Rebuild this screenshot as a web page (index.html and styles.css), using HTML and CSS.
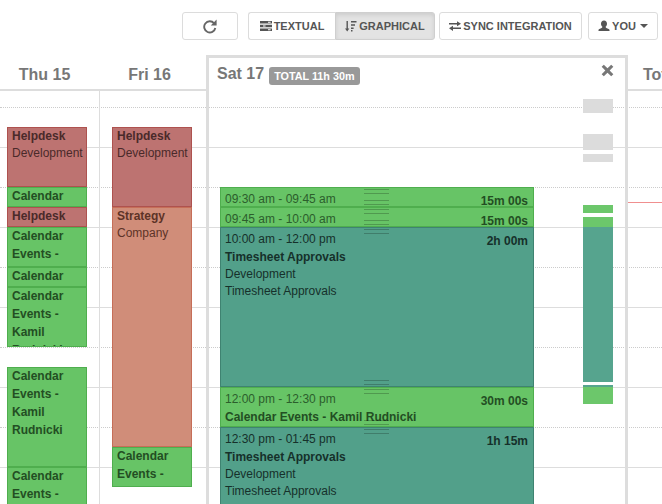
FILE: index.html
```html
<!DOCTYPE html>
<html lang="en">
<head>
<meta charset="utf-8">
<title>Timesheet</title>
<link rel="stylesheet" href="styles.css">
</head>
<body>
<div class="toolbar">
  <button class="btn btn-refresh" aria-label="Refresh">
    <svg class="ico ico-refresh" viewBox="0 0 16 16"><path class="arc" d="M12.100 5.300 A5.600 5.600 0 1 0 13.300 10"/><path d="M14.600 1.600V7.400H8.800z"/></svg>
  </button>
  <div class="btn-group">
    <button class="btn"><svg class="ico" viewBox="0 0 12 12"><path d="M0 1h12v2.600H0zM0 4.700h12v2.600H0zM0 8.400h12V11H0z"/><path class="cut" d="M8 1.800h2.600v1H8zM3 5.500h2.600v1H3zM8 9.200h2.600v1H8z"/></svg>Textual</button>
    <button class="btn active"><svg class="ico" viewBox="0 0 12 12"><path d="M1.500 1h1.400v7.500h1.400L2.200 11.500 0 8.500h1.500zM6 1h5.500v1.600H6zM6 4.200h4v1.600H6zM6 7.400h2.600v1.600H6zM6 10h1.500v1.500H6z"/></svg>Graphical</button>
  </div>
  <button class="btn btn-sync"><svg class="ico" viewBox="0 0 12 12"><path d="M0 3h8V1.200L12 3.800 8 6.200V4.600H0zM12 7.400H4V5.800L0 8.300 4 10.900V9H12z"/></svg>Sync Integration</button>
  <button class="btn btn-you"><svg class="ico" viewBox="0 0 12 12"><path d="M6 .5c1.900 0 3 1.400 3 3.200 0 1.300-.6 2.500-1.400 3.100 0 .8.400 1 1.400 1.400 1.300.5 2.500 1 2.500 1.800v1H.5v-1c0-.8 1.200-1.300 2.500-1.800 1-.4 1.400-.6 1.400-1.400C3.600 6.200 3 5 3 3.700 3 1.900 4.100.5 6 .5z"/></svg>You<span class="caret"></span></button>
</div>

<div class="calendar">
  <div class="gridlines">
    <i class="dot"></i><i class="sol"></i><i class="dot"></i><i class="sol"></i><i class="dot"></i><i class="sol"></i><i class="dot"></i><i class="sol"></i><i class="dot"></i><i class="sol"></i>
  </div>
  <div class="now-line"></div>

  <section class="day day-thu">
    <h2 class="day-head">Thu 15</h2>
    <div class="stack">
      <div class="ev red" style="height:60px"><b>Helpdesk</b><span>Development</span></div>
      <div class="ev green" style="height:20px"><b>Calendar</b></div>
      <div class="ev red" style="height:20px"><b>Helpdesk</b></div>
      <div class="ev green" style="height:40px"><b>Calendar Events -</b></div>
      <div class="ev green" style="height:20px"><b>Calendar</b></div>
      <div class="ev green" style="height:60px"><b>Calendar Events - Kamil Rudnicki</b></div>
      <div class="ev green gap" style="height:100px"><b>Calendar Events - Kamil Rudnicki</b></div>
      <div class="ev green" style="height:60px"><b>Calendar Events - Kamil Rudnicki</b></div>
    </div>
  </section>

  <section class="day day-fri">
    <h2 class="day-head">Fri 16</h2>
    <div class="stack">
      <div class="ev red" style="height:80px"><b>Helpdesk</b><span>Development</span></div>
      <div class="ev salmon" style="height:240px"><b>Strategy</b><span>Company</span></div>
      <div class="ev green" style="height:40px"><b>Calendar Events -</b></div>
    </div>
  </section>

  <section class="panel">
    <header class="panel-head">
      <h2 class="panel-title">Sat 17</h2>
      <span class="badge">TOTAL 11h 30m</span>
      <svg class="close" viewBox="0 0 12 12"><path d="M2.600.6 6 4 9.400.6 11.400 2.600 8 6l3.400 3.400-2 2L6 8l-3.400 3.400-2-2L4 6 .6 2.600z"/></svg>
    </header>
    <div class="panel-body">
      <div class="rows">
        <article class="row green" style="height:20px"><span class="dur">15m 00s</span><div>09:30 am - 09:45 am</div></article>
        <article class="row green" style="height:20px"><span class="dur">15m 00s</span><div>09:45 am - 10:00 am</div></article>
        <article class="row teal" style="height:160px"><span class="dur">2h 00m</span><div>10:00 am - 12:00 pm</div><div><b>Timesheet Approvals</b></div><div class="sub">Development</div><div class="sub">Timesheet Approvals</div></article>
        <article class="row green" style="height:40px"><span class="dur">30m 00s</span><div>12:00 pm - 12:30 pm</div><div><b>Calendar Events - Kamil Rudnicki</b></div></article>
        <article class="row teal" style="height:100px"><span class="dur">1h 15m</span><div>12:30 pm - 01:45 pm</div><div><b>Timesheet Approvals</b></div><div class="sub">Development</div><div class="sub">Timesheet Approvals</div></article>
      </div>
      <div class="minimap">
        <i class="m-grey" style="height:14px"></i>
        <i class="m-grey" style="height:16px;margin-top:21px"></i>
        <i class="m-grey" style="height:8px;margin-top:4px"></i>
        <i class="m-green" style="height:8px;margin-top:43px"></i>
        <i class="m-green" style="height:10px;margin-top:4px"></i>
        <i class="m-teal" style="height:155px"></i>
        <i class="m-teal" style="height:2px;margin-top:3px"></i>
        <i class="m-green" style="height:17px"></i>
      </div>
    </div>
  </section>

  <section class="day day-total">
    <h2 class="day-head">Total</h2>
  </section>
</div>
</body>
</html>
```
FILE: styles.css
```css
* { box-sizing: border-box; }
html, body { margin: 0; height: 504px; overflow: hidden; background: #fff; }
body { font: 12px/18px "Liberation Sans", Arial, sans-serif; color: #333; }

.toolbar { display: flex; height: 55px; padding: 12px 4px 0 182px; }
.btn {
  display: inline-flex; align-items: center; justify-content: center; height: 28px; padding: 0;
  border: 1px solid #dcdcdc; border-radius: 3px; background: #fff; color: #555; white-space: nowrap;
  font: bold 11px/1 "Liberation Sans", Arial, sans-serif; text-transform: uppercase;
}
.btn.active { background: #e3e3e3; border-color: #cfcfcf; box-shadow: inset 0 2px 4px rgba(0,0,0,.1); }
.btn-refresh { width: 56px; margin-right: 10px; }
.btn-group { display: flex; margin-right: 4px; }
.btn-group .btn:first-child { width: 87px; border-radius: 3px 0 0 3px; border-right: 0; }
.btn-group .btn:last-child { width: 100px; border-radius: 0 3px 3px 0; }
.btn-sync { width: 143px; margin-right: 6px; }
.btn-you { width: 70px; }
.ico { width: 12px; height: 12px; margin-right: 2px; fill: #555; flex: none; }
.ico .cut { fill: #fff; }
.ico-refresh { width: 16px; height: 16px; margin: 0; fill: #666; }
.ico-refresh .arc { fill: none; stroke: #666; stroke-width: 1.900; }
.caret { margin-left: 4px; border-top: 4px solid #555; border-left: 4px solid transparent; border-right: 4px solid transparent; }

.calendar { position: relative; display: flex; height: 449px; overflow: hidden; }
.gridlines { position: absolute; left: 0; right: 0; top: 34px; border-top: 2px solid #ddd; }
.gridlines i { display: block; height: 40px; }
.gridlines i:first-child { height: 17px; }
.gridlines .dot { border-bottom: 1px dotted #ccc; }
.gridlines .sol { border-bottom: 1px solid #ddd; }
.now-line { position: absolute; left: 628px; right: 0; top: 147px; height: 1px; background: #f08f8f; }

.day { position: relative; flex: none; display: flex; flex-direction: column; height: 449px; }
.day-head { margin: 0; height: 36px; flex: none; padding-top: 9px; font: bold 16px/22px "Liberation Sans", Arial, sans-serif; color: #777; text-align: center; }
.stack { display: flex; flex-direction: column; flex: 1; padding-top: 36px; }
.day-thu { width: 99px; }
.day-thu .stack { padding-left: 7px; padding-right: 12px; }
.day-thu .day-head { padding-right: 10px; }
.day-fri { width: 107px; }
.day-fri .day-head { padding-right: 6px; }
.day-fri .stack { padding-left: 12px; padding-right: 14px; border-left: 1px solid #ddd; }
.day-total { width: 34px; padding-left: 15px; }
.day-total .day-head { text-align: left; white-space: nowrap; }

.ev { overflow: hidden; padding: 0 4px; border-width: 1px; border-style: solid; flex: none; }
.ev b { display: block; margin-top: -1px; line-height: 18px; }
.ev span { display: block; line-height: 17px; }
.ev.gap { margin-top: 20px; }
.red { background: #bd7371; border-color: #ae524f; color: #4a2a2a; }
.salmon { background: #d08d79; border-color: #c66e58; color: #5d3327; }
.green { background: #67c466; border-color: #4fae4e; color: #234e23; }
.teal { background: #52a08a; border-color: #3f8371; color: #16302a; }

.panel {
  position: relative; flex: none; width: 422px; height: 449px;
  border: 3px solid #ddd; border-bottom: 0;
}
.panel-head { display: flex; align-items: flex-start; height: 33px; padding: 5px 0 0 8px; background: #fff; }
.panel-title { margin: 0 5px 0 0; font: bold 16px/22px "Liberation Sans", Arial, sans-serif; color: #777; }
.badge { margin-top: 4px; padding: 0 5px; height: 18px; border-radius: 3px; background: #999; color: #fff; font: bold 10.800px/18px "Liberation Sans", Arial, sans-serif; }
.close { position: absolute; right: 11px; top: 6px; width: 13px; height: 13px; fill: #777; }

.panel-body { display: flex; padding: 96px 0 0 11px; }
.rows { width: 314px; flex: none; }
.row { position: relative; padding: 2px 5px 0 4px; border-width: 1px; border-style: solid; }
.row::before, .row::after {
  content: ""; position: absolute; left: 143px; width: 25px; height: 3px;
  border-top: 1px solid rgba(0,0,0,.22); border-bottom: 1px solid rgba(0,0,0,.22);
}
.row::before { top: 1px; }
.row::after { bottom: 1px; }
.row div { line-height: 18px; }
.row .sub { line-height: 17px; }
.dur { float: right; font-weight: bold; margin-top: 2px; }
.green.row div:first-of-type { color: #2c5e2c; }

.minimap { display: flex; flex-direction: column; width: 30px; margin-left: 49px; margin-top: -88px; flex: none; }
.minimap i { display: block; flex: none; }
.m-grey { background: #dcdcdc; }
.m-green { background: #6cc76b; }
.m-teal { background: #56a48e; }
```
